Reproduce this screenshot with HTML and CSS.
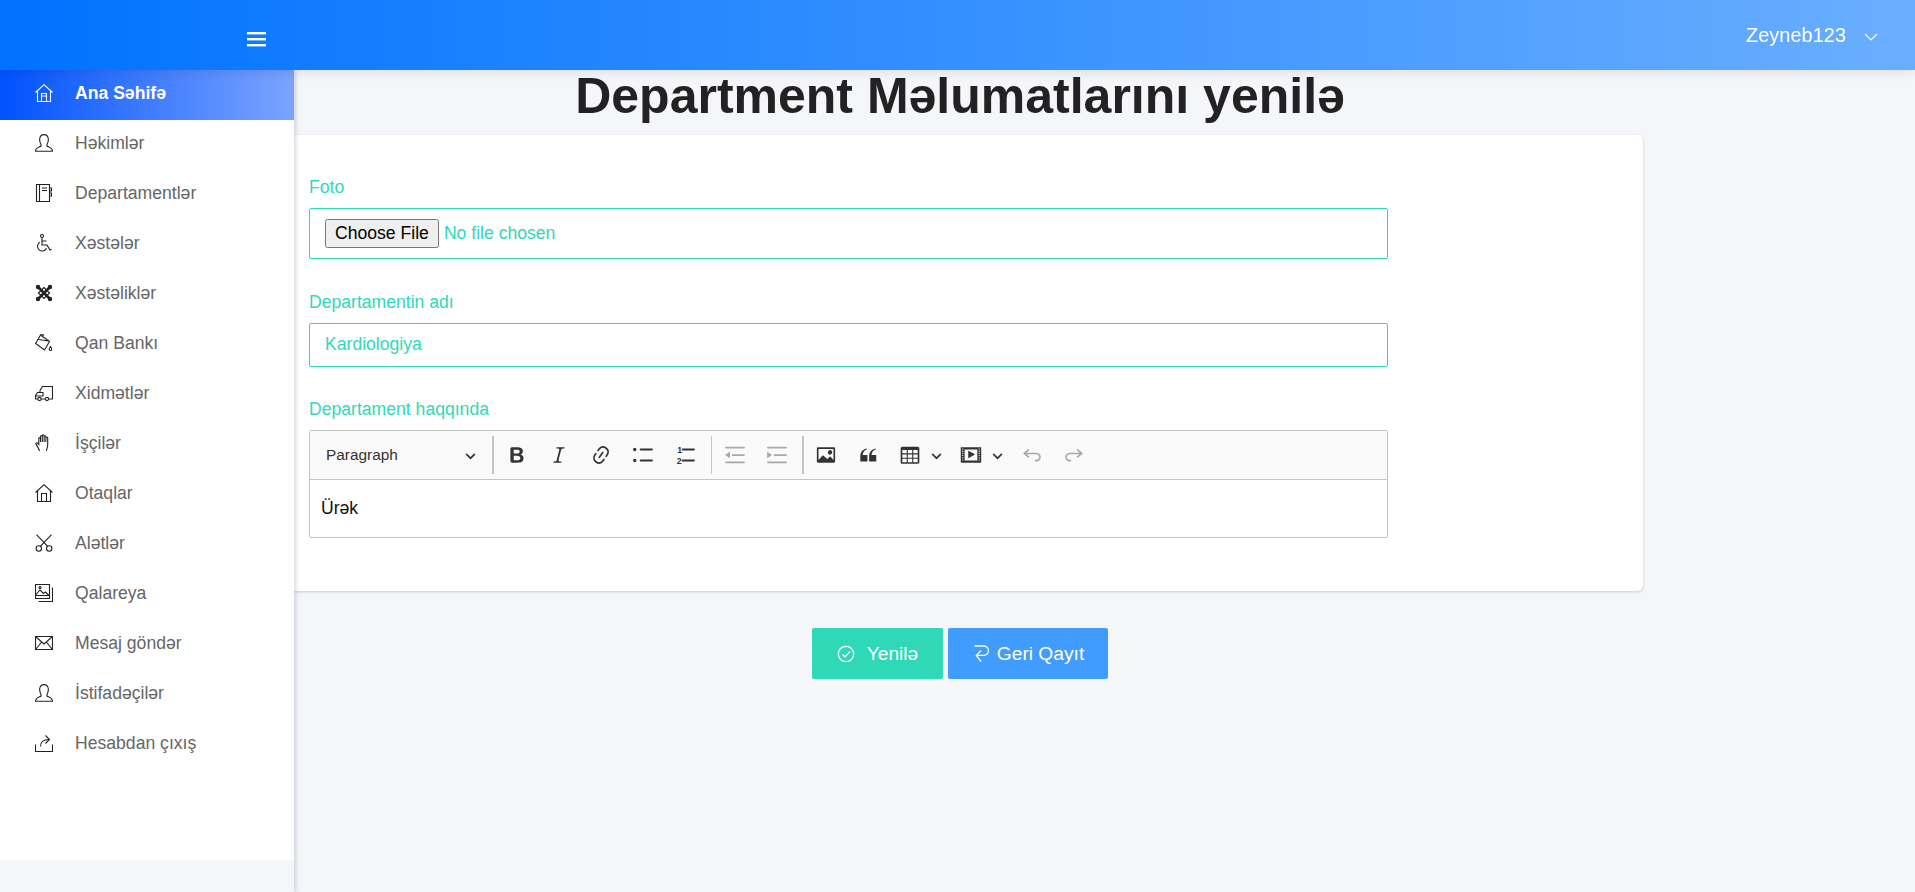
FILE: index.html
```html
<!DOCTYPE html>
<html lang="az">
<head>
  <meta charset="UTF-8" />
  <meta name="viewport" content="width=device-width, initial-scale=1" />
  <title>Department Məlumatlarını yenilə</title>
  <link rel="stylesheet" href="styles.css">
</head>
<body>
  <header class="topbar">
    <div class="topbar-left">
      <svg class="burger" viewBox="0 0 20 16" width="20" height="16"><rect y="1" width="19" height="2.4"/><rect y="7" width="19" height="2.4"/><rect y="13" width="19" height="2.4"/></svg>
    </div>
    <div class="user">
      <span>Zeyneb123</span>
      <svg viewBox="0 0 14 8" width="14" height="8"><path d="M1 1l6 6 6-6"/></svg>
    </div>
  </header>

  <aside class="sidebar">
    <nav class="menu">
      <a class="menu-item active" href="#">
        <svg class="ico" viewBox="0 0 18 18"><path d="M.5 8.500L9 .7l8.500 7.800M2.500 7v10.500h13V7M6.500 17.500v-8h5v8M6.500 12h5"/></svg>
        Ana Səhifə
      </a>
      <a class="menu-item" href="#">
        <svg class="ico" viewBox="0 0 18 18"><path d="M6 10.500C4.800 8.500 4.500 7 4.700 4.800 5 2 7 .6 9 .6s4 1.400 4.300 4.200c.2 2.200-.1 3.700-1.300 5.700v1.500c1 1 5.500 1.500 5.500 5.300H.5C.5 13.500 5 13 6 12z"/></svg>
        Həkimlər
      </a>
      <a class="menu-item" href="#">
        <svg class="ico" viewBox="0 0 18 18"><path d="M1.500.5h13v17h-13zM4.500.5v17M7 4h5M7 6.500h5M14.500 4h2v3h-2M14.500 9h2v3h-2"/></svg>
        Departamentlər
      </a>
      <a class="menu-item" href="#">
        <svg class="ico" viewBox="0 0 18 18"><circle cx="7" cy="2" r="1.500"/><path d="M7 4v7h5l3 5 1.500-.7M7 7h4.500M4.800 8.300a4.700 4.700 0 1 0 6.700 6"/></svg>
        Xəstələr
      </a>
      <a class="menu-item" href="#">
        <svg class="ico knot" viewBox="0 0 18 18"><path d="M3 3l12 12M15 3L3 15"/><path class="knot-ring" d="M9 3.500L3.500 9 9 14.500 14.500 9z"/><path class="knot-corner" d="M.8 3a2.200 2.200 0 1 0 4.400 0 2.200 2.200 0 1 0-4.400 0zM12.800 3a2.200 2.200 0 1 0 4.400 0 2.200 2.200 0 1 0-4.400 0zM.8 15a2.200 2.200 0 1 0 4.400 0 2.200 2.200 0 1 0-4.400 0zM12.800 15a2.200 2.200 0 1 0 4.400 0 2.200 2.200 0 1 0-4.400 0z"/></svg>
        Xəstəliklər
      </a>
      <a class="menu-item" href="#">
        <svg class="ico" viewBox="0 0 18 18"><path d="M5.500 1l9 6.500-5 8.500L.7 9.500zM3.500 5.500l10.500 1.500M5.500 1C6.500.4 8 .6 9 1.500M15.500 12.500c-.8 1.200-1.300 1.900-1.300 2.700a1.300 1.300 0 0 0 2.600 0c0-.8-.5-1.500-1.300-2.700z"/></svg>
        Qan Bankı
      </a>
      <a class="menu-item" href="#">
        <svg class="ico" viewBox="0 0 18 18"><path d="M5 8.500V6.500l2.500-4h10v12.500h-3.500M10 15H6M3 15H.6v-3.500L2.500 8.500H8V12H1"/><circle cx="4.500" cy="15" r="1.600"/><circle cx="12" cy="15" r="1.600"/></svg>
        Xidmətlər
      </a>
      <a class="menu-item" href="#">
        <svg class="ico" viewBox="0 0 18 18"><path d="M4.500 17C4 14.500 1.500 11.500.8 9.500c1-1.400 2-.5 3 1V4.500c0-1.300 1.700-1.300 1.700 0V8M5.500 8V2.500c0-1.300 1.800-1.300 1.800 0V8M7.300 8V1.700c0-1.300 1.800-1.300 1.800 0V8M9.100 8V2.700c0-1.300 1.800-1.300 1.800 0V8M10.900 8V4c0-1.300 1.800-1.300 1.800 0v5.500c.3 2.500-.7 4.500-1.400 7.500"/></svg>
        İşçilər
      </a>
      <a class="menu-item" href="#">
        <svg class="ico" viewBox="0 0 18 18"><path d="M.5 8.500L9 .7l8.500 7.800M2.500 7v10.500h13V7M6.500 17.500v-8h5v8"/></svg>
        Otaqlar
      </a>
      <a class="menu-item" href="#">
        <svg class="ico" viewBox="0 0 18 18"><circle cx="3.800" cy="14.500" r="2.700"/><circle cx="14.200" cy="14.500" r="2.700"/><path d="M5.300 12.300L16.500.7M12.700 12.300L1.500.7"/></svg>
        Alətlər
      </a>
      <a class="menu-item" href="#">
        <svg class="ico" viewBox="0 0 18 18"><path d="M.5.500h14v14H.5zM3.500 17.500h14v-14M.5 11L5 6l3.500 3.500L10.500 8l4 4M.5 11.500h14"/><circle cx="5" cy="3.500" r="1"/></svg>
        Qalareya
      </a>
      <a class="menu-item" href="#">
        <svg class="ico" viewBox="0 0 18 18"><path d="M.5 2.500h17v13H.5zM.5 2.500L9 10l8.500-7.500M.5 15.500l6.200-7.500M17.500 15.500L11.300 8"/></svg>
        Mesaj göndər
      </a>
      <a class="menu-item" href="#">
        <svg class="ico" viewBox="0 0 18 18"><path d="M6 10.500C4.800 8.500 4.500 7 4.700 4.800 5 2 7 .6 9 .6s4 1.400 4.300 4.200c.2 2.200-.1 3.700-1.300 5.700v1.500c1 1 5.500 1.500 5.500 5.300H.5C.5 13.500 5 13 6 12z"/></svg>
        İstifadəçilər
      </a>
      <a class="menu-item" href="#">
        <svg class="ico" viewBox="0 0 18 18"><path d="M.5 10.500v7h17v-7M5.500 12.500c0-4 2.500-7 8.500-7M10.500 1.500l4 4-4 4"/></svg>
        Hesabdan çıxış
      </a>
    </nav>
  </aside>

  <main class="content">
    <h1 class="page-title">Department Məlumatlarını yenilə</h1>

    <form class="card">
      <div class="field">
        <label for="photo">Foto</label>
        <input class="file-input" type="file" id="photo" />
      </div>
      <div class="field">
        <label for="deptName">Departamentin adı</label>
        <input class="text-input" type="text" id="deptName" value="Kardiologiya" />
      </div>
      <div class="field field-editor">
        <label>Departament haqqında</label>
        <div class="editor">
          <div class="toolbar">
            <div class="tb-heading">
              <span>Paragraph</span>
              <svg class="chev" viewBox="0 0 10 10"><path d="M.941 4.523a.75.75 0 1 1 1.06-1.06l3.006 3.005 3.005-3.005a.75.75 0 1 1 1.06 1.06l-3.549 3.55a.75.75 0 0 1-1.168-.136L.941 4.523z"/></svg>
            </div>
            <span class="tb-sep"></span>
            <button class="tb-btn" type="button"><svg viewBox="0 0 20 20"><path d="M10.187 17H5.773c-.637 0-1.092-.138-1.364-.415-.273-.277-.409-.718-.409-1.323V4.738c0-.617.14-1.062.419-1.332.279-.27.73-.406 1.354-.406h4.680c.69 0 1.288.041 1.793.124.506.083.96.242 1.360.478.341.197.644.447.906.75a3.262 3.262 0 0 1 .808 2.162c0 1.401-.722 2.426-2.167 3.075C15.05 10.175 16 11.315 16 13.010a3.756 3.756 0 0 1-2.296 3.504 6.100 6.100 0 0 1-1.517.377c-.571.073-1.238.11-2 .11zm-.217-6.217H7v4.087h3.069c1.977 0 2.965-.69 2.965-2.072 0-.707-.256-1.220-.768-1.537-.512-.319-1.277-.478-2.296-.478zM7 5.130v3.619h2.606c.729 0 1.292-.067 1.690-.2a1.600 1.600 0 0 0 .91-.765c.165-.267.247-.566.247-.897 0-.707-.26-1.176-.778-1.409-.519-.232-1.310-.348-2.375-.348H7z"/></svg></button>
            <button class="tb-btn" type="button"><svg viewBox="0 0 20 20"><path d="m9.586 14.633.021.004c-.036.335.095.655.393.962.082.083.173.15.274.201h1.474a.6.6 0 1 1 0 1.200H5.304a.6.6 0 0 1 0-1.200h1.150c.474-.07.809-.182 1.005-.334.157-.122.291-.32.404-.597l2.416-9.550a1.053 1.053 0 0 0-.281-.823 1.120 1.120 0 0 0-.442-.296H8.150a.6.6 0 0 1 0-1.200h6.443a.6.6 0 1 1 0 1.200h-1.195c-.376.056-.65.155-.823.296-.215.175-.423.439-.623.79l-2.366 9.347z"/></svg></button>
            <button class="tb-btn" type="button"><svg viewBox="0 0 20 20"><path d="m11.077 15 .991-1.416a.75.75 0 1 1 1.229.86l-1.148 1.640a.748.748 0 0 1-.217.206 5.251 5.251 0 0 1-8.503-5.955.741.741 0 0 1 .12-.274l1.147-1.639a.75.75 0 1 1 1.228.86L4.933 10.700l.006.003a3.750 3.750 0 0 0 6.132 4.294l.006.004zm5.494-5.335a.748.748 0 0 1-.12.274l-1.147 1.639a.75.75 0 1 1-1.228-.86l.86-1.230a3.750 3.750 0 0 0-6.144-4.301l-.86 1.229a.75.75 0 0 1-1.229-.86l1.148-1.640a.748.748 0 0 1 .217-.206 5.251 5.251 0 0 1 8.503 5.955zm-4.563-2.532a.75.75 0 0 1 .184 1.045l-3.155 4.505a.75.75 0 1 1-1.229-.86l3.155-4.506a.75.75 0 0 1 1.045-.184z"/></svg></button>
            <button class="tb-btn" type="button"><svg viewBox="0 0 20 20"><circle cx="2.500" cy="5" r="1.500"/><circle cx="2.500" cy="15" r="1.500"/><rect x="7" y="4.200" width="12" height="1.600" rx=".7"/><rect x="7" y="14.200" width="12" height="1.600" rx=".7"/></svg></button>
            <button class="tb-btn" type="button"><svg viewBox="0 0 20 20"><text class="tb-num" x="3" y="8">1</text><text class="tb-num" x="2.500" y="18">2</text><rect x="7" y="4.200" width="12" height="1.600" rx=".7"/><rect x="7" y="14.200" width="12" height="1.600" rx=".7"/></svg></button>
            <span class="tb-sep thin"></span>
            <button class="tb-btn off" type="button"><svg viewBox="0 0 20 20"><rect x="1" y="2.600" width="18" height="1.500" rx=".7"/><rect x="7" y="9.300" width="12" height="1.500" rx=".7"/><rect x="1" y="16" width="18" height="1.500" rx=".7"/><path d="M1 10l4.500-3v6z"/></svg></button>
            <button class="tb-btn off" type="button"><svg viewBox="0 0 20 20"><rect x="1" y="2.600" width="18" height="1.500" rx=".7"/><rect x="7" y="9.300" width="12" height="1.500" rx=".7"/><rect x="1" y="16" width="18" height="1.500" rx=".7"/><path d="M5.500 10L1 7v6z"/></svg></button>
            <span class="tb-sep tight"></span>
            <button class="tb-btn" type="button"><svg viewBox="0 0 20 20"><path d="M6.910 10.540c.26-.23.64-.21.88.03l3.360 3.140 2.230-2.060a.64.64 0 0 1 .87 0l2.520 2.970V4.500H3.200v10.120l3.710-4.080zm10.270-7.510c.6 0 1.090.47 1.090 1.050v11.840c0 .59-.49 1.060-1.090 1.060H2.790c-.6 0-1.090-.47-1.090-1.060V4.080c0-.58.49-1.050 1.100-1.050h14.380zm-5.220 5.560a1.960 1.960 0 1 1 3.400-1.960 1.960 1.960 0 0 1-3.400 1.960z"/></svg></button>
            <button class="tb-btn" type="button"><svg viewBox="0 0 20 20"><path d="M3 10.423a6.500 6.500 0 0 1 6.056-6.408l.038.67C6.448 5.423 5.354 7.663 5.220 10H9c.552 0 .5.432.5.986v4.511c0 .554-.448.503-1 .503h-5c-.552 0-.5-.449-.5-1.003v-4.574zm8 0a6.500 6.500 0 0 1 6.056-6.408l.038.67c-2.646.739-3.740 2.979-3.873 5.315H17c.552 0 .5.432.5.986v4.511c0 .554-.448.503-1 .503h-5c-.552 0-.5-.449-.5-1.003v-4.574z"/></svg></button>
            <button class="tb-btn drop" type="button"><svg viewBox="0 0 20 20"><path d="M3 5.500v3h4v-3H3zm0 4v3h4v-3H3zm0 4v3h4v-3H3zm5 3h4v-3H8v3zm5 0h4v-3h-4v3zm4-4v-3h-4v3h4zm0-4v-3h-4v3h4zm1.500 8a1.500 1.500 0 0 1-1.500 1.500H3A1.500 1.500 0 0 1 1.500 16V4A1.500 1.500 0 0 1 3 2.500h14A1.500 1.500 0 0 1 18.500 4v12zM8 8.500h4v-3H8v3zm0 4h4v-3H8v3z"/></svg><svg class="chev" viewBox="0 0 10 10"><path d="M.941 4.523a.75.75 0 1 1 1.06-1.06l3.006 3.005 3.005-3.005a.75.75 0 1 1 1.06 1.06l-3.549 3.55a.75.75 0 0 1-1.168-.136L.941 4.523z"/></svg></button>
            <button class="tb-btn drop" type="button"><svg viewBox="0 0 20 20"><path d="M18.680 3.030c.6 0 .59-.03.59.55v12.840c0 .59.01.56-.59.56H1.290c-.6 0-.59.03-.59-.56V3.580c0-.58-.01-.55.6-.55h17.380zM15.770 15V5H4.200v10h11.570zM2 4v1h1V4H2zm0 2v1h1V6H2zm0 2v1h1V8H2zm0 2v1h1v-1H2zm0 2v1h1v-1H2zm0 2v1h1v-1H2zm15-10v1h1V4h-1zm0 2v1h1V6h-1zm0 2v1h1V8h-1zm0 2v1h1v-1h-1zm0 2v1h1v-1h-1zm0 2v1h1v-1h-1zM7.500 6.677a.4.4 0 0 1 .593-.351l5.133 2.824a.4.4 0 0 1 0 .7l-5.133 2.824a.4.4 0 0 1-.593-.35V6.676z"/></svg><svg class="chev" viewBox="0 0 10 10"><path d="M.941 4.523a.75.75 0 1 1 1.06-1.06l3.006 3.005 3.005-3.005a.75.75 0 1 1 1.06 1.06l-3.549 3.55a.75.75 0 0 1-1.168-.136L.941 4.523z"/></svg></button>
            <button class="tb-btn off" type="button"><svg viewBox="0 0 20 20"><path d="m5.042 9.367 2.189 1.837a.75.75 0 0 1-.965 1.149l-3.788-3.180a.747.747 0 0 1-.21-.284.75.75 0 0 1 .17-.945L6.230 4.762a.75.75 0 1 1 .964 1.150L4.863 7.866h8.917A.75.75 0 0 1 14 7.900a4 4 0 1 1-1.477 7.718l.344-1.489a2.500 2.500 0 1 0 1.094-4.730l.008-.032H5.042z"/></svg></button>
            <button class="tb-btn off" type="button"><svg viewBox="0 0 20 20"><path d="m14.958 9.367-2.189 1.837a.75.75 0 0 0 .965 1.149l3.788-3.180a.747.747 0 0 0 .21-.284.75.75 0 0 0-.17-.945L13.770 4.762a.75.75 0 1 0-.964 1.150l2.331 1.955H6.220A.75.75 0 0 0 6 7.900a4 4 0 1 0 1.477 7.718l-.344-1.489A2.500 2.500 0 1 1 6.039 9.400l-.008-.032h8.927z"/></svg></button>
          </div>
          <div class="editor-body">Ürək</div>
        </div>
      </div>
    </form>

    <div class="actions">
      <button class="btn btn-save" type="button">
        <svg class="btn-ico" viewBox="0 0 18 18"><circle cx="9" cy="9" r="7.700"/><path d="M5.500 9.500l2.500 2.500 5-5.500"/></svg>
        Yenilə
      </button>
      <button class="btn btn-back" type="button">
        <svg class="btn-ico" viewBox="0 0 15 18"><path d="M.5 1h9a4.700 4.700 0 0 1 .5 9.400H2.500M7 5.500l-4.700 5 4.700 6"/></svg>
        Geri Qayıt
      </button>
    </div>
  </main>
</body>
</html>
```

FILE: styles.css
```css
/* Base */
* {
  box-sizing: border-box;
}

html, body {
  height: 100%;
}

body {
  margin: 0;
  background-color: #f5f6fa;
  font-family: 'Liberation Sans', Arial, sans-serif;
  font-size: 17.6px;
  color: #222;
  overflow: hidden;
}

/* Top bar */
.topbar {
  position: relative;
  z-index: 3;
  height: 70px;
  display: flex;
  justify-content: space-between;
  align-items: center;
  background: linear-gradient(to right, #0072ff, #6aaeff);
  box-shadow: 0 1px 12px rgba(0, 0, 0, 0.12);
  color: #fff;
}

.topbar-left {
  width: 294px;
  padding-right: 27px;
  display: flex;
  justify-content: flex-end;
  margin-top: 7px;
}

.burger {
  fill: #fff;
}

.user {
  display: flex;
  align-items: center;
  gap: 18px;
  padding-right: 37px;
  font-size: 20px;
}

.user svg {
  fill: none;
  stroke: #fff;
  stroke-width: 1.2;
  margin-top: 3px;
}

/* Sidebar */
.sidebar {
  position: fixed;
  top: 70px;
  left: 0;
  bottom: 0;
  width: 294px;
  z-index: 2;
  background-color: #f5f6fa;
  box-shadow: 1px 0 5px rgba(40, 50, 90, 0.25);
}

.menu {
  height: 790px;
  background-color: #fff;
}

.menu-item {
  height: 50px;
  display: flex;
  align-items: center;
  padding: 0 0 4px 35px;
  gap: 22px;
  color: #666;
  text-decoration: none;
}

.menu-item.active {
  background: linear-gradient(to right, #0052ff, #7ba4ff);
  color: #fff;
  font-weight: 700;
}

.ico {
  width: 18px;
  height: 18px;
  flex: none;
  fill: none;
  stroke: #222;
  stroke-width: 1.1;
}

.active .ico {
  stroke: #fff;
}

.knot {
  stroke-width: 2.6;
}

.knot-ring {
  stroke-width: 1.2;
}

.knot-corner {
  fill: #222;
  stroke: none;
}

/* Main */
.content {
  padding-left: 5px;
}

.page-title {
  height: 65px;
  margin: 0;
  font-size: 50px;
  font-weight: 700;
  line-height: 52px;
  text-align: center;
  color: #222;
}

.card {
  width: 1349px;
  height: 456px;
  margin-left: 289px;
  padding: 43px 15px 0;
  background-color: #fff;
  border-radius: 0 6px 6px 0;
  box-shadow: 0 1px 3px rgba(0, 0, 0, 0.18);
}

.field {
  width: 1079px;
  margin-bottom: 34px;
}

.field-editor {
  margin-top: -1px;
}

.field-editor label {
  margin-bottom: 13px;
}

label {
  display: block;
  margin-bottom: 12px;
  line-height: 18px;
  color: #2fd9b8;
}

.file-input,
.text-input {
  display: block;
  width: 100%;
  border: 1px solid #2fd9b8;
  border-radius: 2px;
  background: #fff;
  font-family: inherit;
  font-size: 17.6px;
  color: #2fd9b8;
  outline: none;
}

.file-input {
  height: 51px;
  padding: 10px 15px;
}

.file-input::file-selector-button {
  height: 29px;
  margin-right: 5px;
  padding: 1px 8px;
}

.text-input {
  height: 44px;
  padding: 0 15px 1px;
}

/* Editor */
.editor {
  border: 1px solid #c4c4c4;
  border-radius: 2px;
  margin-top: -1px;
}

.toolbar {
  height: 49px;
  display: flex;
  align-items: center;
  background-color: #fafafa;
  border-bottom: 1px solid #c4c4c4;
}

.tb-heading {
  width: 180px;
  padding: 0 14px 0 16px;
  display: flex;
  justify-content: space-between;
  align-items: center;
  font-size: 15.4px;
  color: #333;
}

.chev {
  width: 11px;
  height: 11px;
  fill: #333;
}

.tb-sep {
  width: 2px;
  height: 38px;
  margin: 0 5px 0 2px;
  background-color: #c4c4c4;
}

.tb-sep.thin {
  width: 1px;
}

.tb-sep.tight {
  margin: 0 4px 0 1px;
}

.tb-btn {
  width: 36px;
  height: 36px;
  margin-right: 6px;
  padding: 0;
  border: none;
  background: none;
  display: flex;
  align-items: center;
  justify-content: center;
  gap: 10px;
}

.tb-btn svg {
  width: 22px;
  height: 22px;
  flex: none;
  fill: #333;
}

.tb-btn .chev {
  width: 11px;
  height: 11px;
}

.tb-btn.drop {
  width: 56px;
  justify-content: flex-start;
  padding-left: 7px;
  margin-right: 5px;
}

.tb-btn.off svg {
  fill: #a8a8a8;
}

.tb-num {
  font-size: 8px;
  font-weight: 700;
  font-family: 'Liberation Sans', sans-serif;
}

.editor-body {
  height: 57px;
  padding: 18px 11px 0;
  line-height: 20px;
  font-size: 17.6px;
  color: #111;
}

/* Buttons */
.actions {
  display: flex;
  justify-content: center;
  gap: 5px;
  margin-top: 37px;
}

.btn {
  height: 51px;
  padding: 0;
  border: none;
  border-radius: 2px;
  display: flex;
  align-items: center;
  justify-content: center;
  font-family: inherit;
  font-size: 19.2px;
  color: #fff;
}

.btn-save {
  width: 131px;
  gap: 12px;
  background-color: #2fd9b8;
}

.btn-back {
  width: 160px;
  gap: 8px;
  padding-left: 2px;
  background-color: #409cff;
}

.btn-ico {
  width: 18px;
  height: 18px;
  fill: none;
  stroke: #fff;
  stroke-width: 1.3;
}

.btn-back .btn-ico {
  width: 15px;
}
```
